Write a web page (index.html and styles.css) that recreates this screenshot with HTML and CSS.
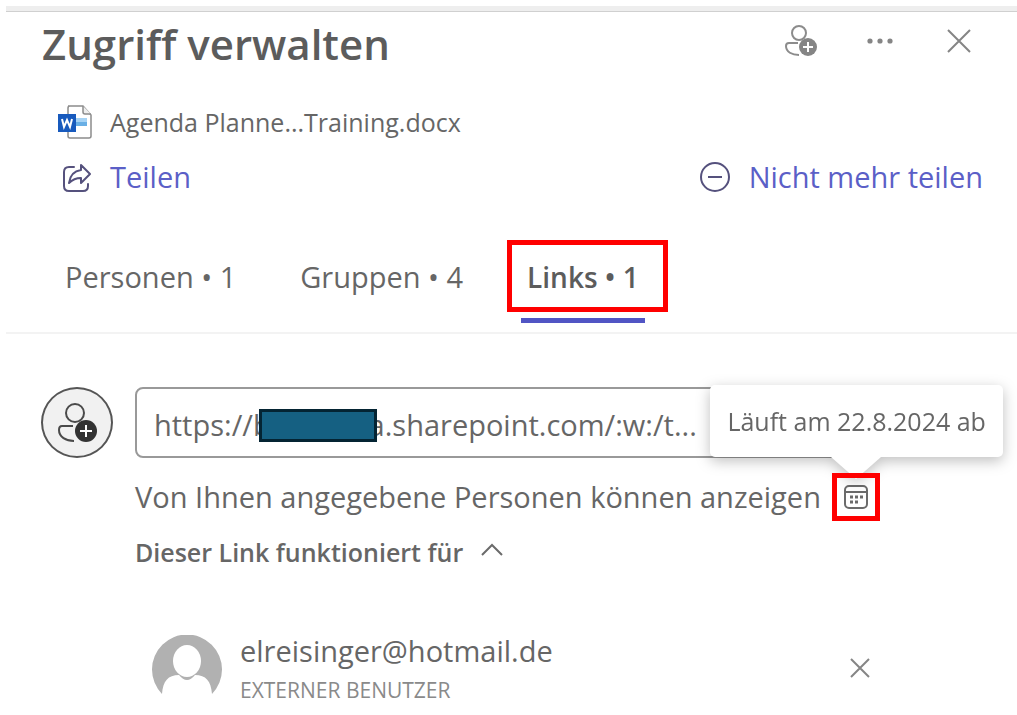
FILE: index.html
```html
<!DOCTYPE html>
<html lang="de">
<head>
    <meta charset="UTF-8">
    <meta name="viewport" content="width=device-width, initial-scale=1.0">
    <title>Zugriff verwalten</title>
    <link rel="stylesheet" href="styles.css">
</head>
<body>
    <div class="panel">
        <header class="panel-header">
            <h1>Zugriff verwalten</h1>
            <div class="header-actions">
                <button class="icon-btn" aria-label="Zugriff gewähren">
                    <svg width="34" height="34" viewBox="0 0 34 34" fill="none" stroke="#8c8c8c" stroke-width="2">
                        <circle cx="15" cy="9" r="7"/>
                        <path d="M14 19H5Q2 19 2 22C2 28 8 31 15 31"/>
                        <circle cx="24" cy="23" r="9" fill="#858585" stroke="none"/>
                        <path d="M24 18v10M19 23h10" stroke="#fff"/>
                    </svg>
                </button>
                <button class="icon-btn" aria-label="Weitere Optionen">
                    <svg width="28" height="8" viewBox="0 0 28 8" fill="#858585">
                        <circle cx="4" cy="4" r="2.6"/>
                        <circle cx="14" cy="4" r="2.6"/>
                        <circle cx="24" cy="4" r="2.6"/>
                    </svg>
                </button>
                <button class="icon-btn" aria-label="Schließen">
                    <svg width="24" height="24" viewBox="0 0 24 24" stroke="#858585" stroke-width="2">
                        <path d="M1 1l22 22M23 1L1 23"/>
                    </svg>
                </button>
            </div>
        </header>

        <div class="file-row">
            <svg width="36" height="36" viewBox="-2 0 36 36">
                <path d="M10 2h15l8 9v21q0 2-2 2H12q-2 0-2-2V4q0-2 2-2z" fill="#fff" stroke="#8c8c8c" stroke-width="1.5"/>
                <path d="M25 2v6q0 2 2 2h6" fill="#eee" stroke="#8c8c8c" stroke-width="1.5"/>
                <path d="M18 14h11v5H18z" fill="#a6d3f5"/>
                <path d="M18 18h11v4H18z" fill="#69afe5"/>
                <path d="M0 10h18v18H0z" fill="#185abd"/>
                <path d="M4 15l2 8 3-7 3 7 2-8" fill="none" stroke="#fff" stroke-width="2"/>
            </svg>
            <span class="file-name">Agenda Planne...Training.docx</span>
        </div>

        <div class="share-row">
            <button class="link-btn">
                <svg width="36" height="36" viewBox="-3 -3 36 36" fill="none" stroke="#55517d" stroke-width="2" stroke-linejoin="round" stroke-linecap="round">
                    <path d="M15 5h-5Q5 5 5 10v14q0 5 5 5h14q5 0 5-5v-2"/>
                    <path d="M22 3l9 9-9 9v-5c-5 0-8 1-12 5 1-8 5-12 12-13z"/>
                </svg>
                <span>Teilen</span>
            </button>
            <button class="link-btn">
                <svg width="32" height="32" viewBox="0 0 32 32" fill="none" stroke="#55517d" stroke-width="2">
                    <circle cx="16" cy="16" r="14"/>
                    <path d="M9 16h14"/>
                </svg>
                <span>Nicht mehr teilen</span>
            </button>
        </div>

        <nav class="tabs">
            <button class="tab">Personen • 1</button>
            <button class="tab">Gruppen • 4</button>
            <button class="tab active">Links • 1<span class="tab-mark"></span></button>
        </nav>

        <main class="link-section">
            <div class="link-icon">
                <svg width="42" height="42" viewBox="0 0 42 42" fill="none" stroke="#4a4a4a" stroke-width="2">
                    <circle cx="19" cy="11" r="9"/>
                    <path d="M17 24H6Q3 24 3 28C3 35 10 39 18 39"/>
                    <circle cx="30" cy="29" r="11" fill="#333" stroke="none"/>
                    <path d="M30 23v12M24 29h12" stroke="#fff"/>
                </svg>
            </div>
            <div class="link-details">
                <div class="link-box">
                    <input class="link-url" type="text" aria-label="Link" readonly value="https://b             a.sharepoint.com/:w:/t...">
                    <span class="redacted"></span>
                </div>
                <div class="permission">
                    <span>Von Ihnen angegebene Personen können anzeigen</span>
                    <button class="expiry" aria-label="Ablaufdatum" aria-describedby="expiryTip">
                        <svg width="26" height="26" viewBox="0 0 26 26" fill="none" stroke="#6b6b6b" stroke-width="2">
                            <rect x="2" y="2" width="22" height="22" rx="4"/>
                            <path d="M2 8h22"/>
                            <path d="M7 13h3M12 13h3M17 13h3M7 18h3M12 18h3" stroke-width="3"/>
                        </svg>
                        <span class="tooltip" id="expiryTip" role="tooltip">Läuft am 22.8.2024 ab</span>
                    </button>
                </div>
                <button class="expander">
                    <span>Dieser Link funktioniert für</span>
                    <svg width="22" height="18" viewBox="0 0 22 18" fill="none" stroke="#6b6b6b" stroke-width="2">
                        <path d="M1 12L11 2l10 10"/>
                    </svg>
                </button>
                <div class="user">
                    <svg width="70" height="70" viewBox="0 0 70 70">
                        <path d="M10 59A35 35 0 1 1 60 59C59 46 54 40 43 40Q35 50 27 40C16 40 11 46 10 59z" fill="#b1b1b1"/>
                        <ellipse cx="35" cy="26" rx="14" ry="16" fill="#fff"/>
                    </svg>
                    <div class="user-text">
                        <div class="user-mail">elreisinger@hotmail.de</div>
                        <div class="user-type">EXTERNER BENUTZER</div>
                    </div>
                    <button class="remove" aria-label="Entfernen">
                        <svg width="20" height="20" viewBox="0 0 20 20" stroke="#858585" stroke-width="2">
                            <path d="M1 1l18 18M19 1L1 19"/>
                        </svg>
                    </button>
                </div>
            </div>
        </main>
    </div>
</body>
</html>
```
FILE: styles.css
```css
* {
    box-sizing: border-box;
}

body {
    margin: 0;
    padding: 6px 0 0 6px;
    background: #fff;
    color: #666;
    font-family: "Open Sans", "Noto Sans", sans-serif;
    font-size: 29px;
    line-height: 40px;
}

button {
    padding: 0;
    border: none;
    background: none;
    color: inherit;
    font: inherit;
    cursor: pointer;
    white-space: nowrap;
}

svg {
    display: block;
    flex: none;
}

.panel {
    border-top: 5px solid #eee;
    box-shadow: inset 0 1px #d0d0d0;
}

.panel-header {
    display: flex;
    justify-content: space-between;
    padding: 5px 41px 0 36px;
}

h1 {
    margin: 0;
    color: #5c5c5c;
    font-size: 42px;
    font-weight: 600;
    line-height: 56px;
}

.header-actions {
    display: flex;
    gap: 45px;
    height: 50px;
}

.icon-btn {
    display: flex;
    align-items: center;
    justify-content: center;
    width: 34px;
}

.file-row {
    display: flex;
    align-items: center;
    gap: 18px;
    padding: 30px 0 0 50px;
}

.file-name {
    font-size: 25px;
}

.share-row {
    display: flex;
    justify-content: space-between;
    padding: 15px 34px 0 50px;
}

.link-btn {
    display: flex;
    align-items: center;
    gap: 18px;
    color: #5b5fc7;
}

.tabs {
    display: flex;
    gap: 52px;
    padding: 56px 0 9px 53px;
    border-bottom: 2px solid #f3f3f3;
}

.tab {
    position: relative;
    padding: 4px 6px 21px;
    border-bottom: 5px solid transparent;
}

.tab.active {
    border-bottom-color: #5155c4;
    color: #5c5c5c;
    font-size: 28px;
    font-weight: 600;
}

.tab-mark {
    position: absolute;
    top: -13px;
    left: -14px;
    right: -23px;
    height: 72px;
    border: 5px solid #f00;
}

.link-section {
    display: flex;
    gap: 22px;
    padding: 53px 14px 0 35px;
}

.link-icon {
    display: flex;
    flex: none;
    align-items: center;
    justify-content: center;
    width: 72px;
    height: 71px;
    border: 2px solid #555;
    border-radius: 50%;
    background: #f1f1f1;
}

.link-details {
    flex: 1;
}

.link-box {
    position: relative;
    margin-right: 140px;
}

.link-url {
    display: block;
    width: 100%;
    height: 71px;
    padding: 4px 17px 0;
    border: 2px solid #999;
    border-radius: 8px;
    color: inherit;
    font: inherit;
}

/* hides the tenant name */
.redacted {
    position: absolute;
    top: 22px;
    left: 124px;
    width: 118px;
    height: 33px;
    border: 3px solid #042433;
    background: #156082;
}

.permission {
    display: flex;
    align-items: center;
    gap: 11px;
    margin-top: 15px;
    white-space: nowrap;
}

.expiry {
    position: relative;
    display: flex;
    align-items: center;
    justify-content: center;
    width: 48px;
    height: 48px;
}

.expiry::after {
    content: "";
    position: absolute;
    inset: 0;
    border: 5px solid #f00;
}

.tooltip {
    position: absolute;
    right: -123px;
    bottom: 64px;
    padding: 16px 17px;
    border-radius: 5px;
    background: #fff;
    filter: drop-shadow(0 4px 7px rgba(0, 0, 0, 0.25));
    font-size: 25px;
}

.tooltip::after {
    content: "";
    position: absolute;
    top: 100%;
    right: 122px;
    border: 25px solid transparent;
    border-top: 22px solid #fff;
    border-bottom: none;
}

.expander {
    display: flex;
    align-items: center;
    gap: 18px;
    margin-top: 11px;
    font-size: 25px;
    font-weight: 600;
}

.user {
    display: flex;
    gap: 18px;
    margin-top: 63px;
    padding: 0 133px 0 17px;
}

.user-text {
    flex: 1;
}

.user-mail {
    line-height: 32px;
}

.user-type {
    color: #8a8a8a;
    font-size: 21px;
    line-height: 46px;
}

.remove {
    height: 66px;
}
```
